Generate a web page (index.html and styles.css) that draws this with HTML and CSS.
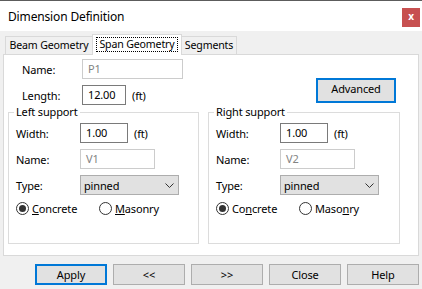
FILE: index.html
```html
<!DOCTYPE html>
<html>
<head>
<meta charset="utf-8">
<link rel="stylesheet" href="styles.css">
</head>
<body>
<div class="window">
  <div class="titlebar">
    <span class="title">Dimension Definition</span>
    <span class="close">x</span>
  </div>
  <div class="tabs">
    <div class="tab t-beam">Beam Geometry</div>
    <div class="tab active t-span"><span class="focus">Span Geometry</span></div>
    <div class="tab t-seg">Segments</div>
  </div>
  <div class="panel">
    <div class="top">
      <div class="fields">
        <div class="row">
          <span class="lbl lbl-top">Name:</span>
          <div class="input disabled w-pname">P1</div>
        </div>
        <div class="row">
          <span class="lbl lbl-top">Length:</span>
          <div class="input w-len">12.00</div>
          <span class="unit">(ft)</span>
        </div>
      </div>
      <div class="btn default adv">Advanced</div>
    </div>
    <div class="groups">
      <fieldset class="group">
        <legend>Left support</legend>
        <div class="rows">
          <div class="row">
            <span class="lbl">Width:</span>
            <div class="input w-width">1.00</div>
            <span class="unit">(ft)</span>
          </div>
          <div class="row">
            <span class="lbl">Name:</span>
            <div class="input disabled w-name">V1</div>
          </div>
          <div class="row">
            <span class="lbl">Type:</span>
            <div class="combo">
              <span>pinned</span>
              <svg class="chev" width="9" height="5" viewBox="0 0 9 5"><path d="M0.5 0.5 L4.5 4.5 L8.5 0.5" fill="none" stroke="#333" stroke-width="1"/></svg>
            </div>
          </div>
          <div class="radios">
            <span class="radio-item first"><span class="radio checked"></span><span><u>C</u>oncrete</span></span>
            <span class="radio-item"><span class="radio"></span><span><u>M</u>asonry</span></span>
          </div>
        </div>
      </fieldset>
      <fieldset class="group">
        <legend>Right support</legend>
        <div class="rows">
          <div class="row">
            <span class="lbl">Width:</span>
            <div class="input w-width">1.00</div>
            <span class="unit">(ft)</span>
          </div>
          <div class="row">
            <span class="lbl">Name:</span>
            <div class="input disabled w-name">V2</div>
          </div>
          <div class="row">
            <span class="lbl">Type:</span>
            <div class="combo">
              <span>pinned</span>
              <svg class="chev" width="9" height="5" viewBox="0 0 9 5"><path d="M0.5 0.5 L4.5 4.5 L8.5 0.5" fill="none" stroke="#333" stroke-width="1"/></svg>
            </div>
          </div>
          <div class="radios">
            <span class="radio-item first"><span class="radio checked"></span><span>Co<u>n</u>crete</span></span>
            <span class="radio-item"><span class="radio"></span><span>Maso<u>n</u>ry</span></span>
          </div>
        </div>
      </fieldset>
    </div>
  </div>
  <div class="buttons">
    <div class="btn default">Apply</div>
    <div class="btn">&lt;&lt;</div>
    <div class="btn">&gt;&gt;</div>
    <div class="btn">Close</div>
    <div class="btn">Help</div>
  </div>
</div>
</body>
</html>
```
FILE: styles.css
```css
* { box-sizing: border-box; }
html, body {
  margin: 0;
  padding: 0;
  width: 422px;
  height: 289px;
  overflow: hidden;
  background: #f0f0f0;
}
body {
  font-family: "Noto Sans", "Open Sans", sans-serif;
  font-size: 11px;
  letter-spacing: -0.15px;
  white-space: nowrap;
  color: #000;
}
.window {
  width: 422px;
  height: 289px;
  border-top: 1px solid #5c5c5c;
}
.titlebar {
  height: 30px;
  background: #fff;
  display: flex;
  align-items: center;
  padding-left: 8px;
}
.title {
  font-size: 12px;
  line-height: 16px;
  margin-top: 1px;
}
.close {
  margin-left: auto;
  margin-right: 2px;
  align-self: flex-start;
  margin-top: 7px;
  width: 18px;
  height: 19px;
  background: #c75050;
  color: #fff;
  font-weight: bold;
  font-size: 10px;
  line-height: 17px;
  text-align: center;
}
.tabs {
  display: flex;
  align-items: flex-end;
  height: 21px;
  margin-top: 3px;
  margin-bottom: -1px;
  padding-left: 5px;
  position: relative;
  z-index: 1;
  font-size: 10.6px;
}
.tab {
  height: 18px;
  margin-bottom: 1px;
  border: 1px solid #d9d9d9;
  border-bottom: none;
  background: #f0f0f0;
  line-height: 17px;
  text-align: center;
}
.t-beam { width: 87px; border-right: none; }
.t-span { width: 90px; }
.t-seg { width: 55px; border-left: none; }
.tab.active {
  height: 21px;
  margin-bottom: 0;
  background: #fff;
  padding: 2px 3px 3px 3px;
}
.focus {
  display: block;
  height: 15px;
  border: 1px dotted #000;
  line-height: 13px;
}
.panel {
  margin: 0 3px;
  height: 202px;
  border: 1px solid #d9d9d9;
  background: #fff;
}
.top {
  display: flex;
  padding: 4px 22px 0 18px;
  height: 50px;
}
.fields {
  display: flex;
  flex-direction: column;
  gap: 6px;
}
.row {
  display: flex;
  align-items: center;
  height: 20px;
}
.lbl {
  width: 64px;
  color: #000;
}
.lbl-top { width: 60px; }
.input {
  height: 20px;
  border: 1px solid #7a7a7a;
  background: #fff;
  padding-left: 5px;
  line-height: 18px;
}
.input.disabled {
  border-color: #cccccc;
  color: #838383;
}
.w-pname { width: 101px; }
.w-len { width: 44px; }
.w-width { width: 48px; }
.w-name { width: 75px; }
.unit { margin-left: 6px; }
.btn {
  width: 72px;
  height: 21px;
  background: #e1e1e1;
  border: 1px solid #adadad;
  text-align: center;
  line-height: 19px;
}
.btn.default {
  border: 2px solid #0078d7;
  line-height: 17px;
}
.adv {
  width: 80px;
  height: 25px;
  line-height: 22px;
  margin-left: auto;
  align-self: flex-end;
  margin-bottom: 2px;
}
.groups {
  display: flex;
  gap: 9px;
  padding-left: 4px;
}
fieldset.group {
  margin: 0;
  height: 139px;
  border: 1px solid #dcdcdc;
  padding: 0 6px 0 7px;
  min-width: 0;
}
.group:first-child { width: 191px; }
.group:last-child { width: 192px; }
legend {
  padding: 0 2px;
  margin-left: -2px;
  line-height: 14px;
}
.rows {
  display: flex;
  flex-direction: column;
  gap: 6px;
  padding-top: 4px;
}
.combo {
  width: 99px;
  height: 20px;
  background: #e1e1e1;
  border: 1px solid #adadad;
  padding-left: 3px;
  padding-right: 4px;
  display: flex;
  align-items: center;
  justify-content: space-between;
}
.radios {
  display: flex;
  align-items: center;
  height: 14px;
}
.radio-item {
  display: flex;
  align-items: center;
  gap: 3px;
}
.radio-item.first { width: 83px; }
.radio {
  width: 13px;
  height: 13px;
  border: 1px solid #333;
  border-radius: 50%;
  background: #fff;
  position: relative;
  display: flex;
  align-items: center;
  justify-content: center;
}
.radio.checked::after {
  content: "";
  width: 7px;
  height: 7px;
  border-radius: 50%;
  background: #333;
}
.buttons {
  display: flex;
  justify-content: flex-end;
  gap: 6px;
  margin-top: 8px;
  padding-right: 3px;
}
```
